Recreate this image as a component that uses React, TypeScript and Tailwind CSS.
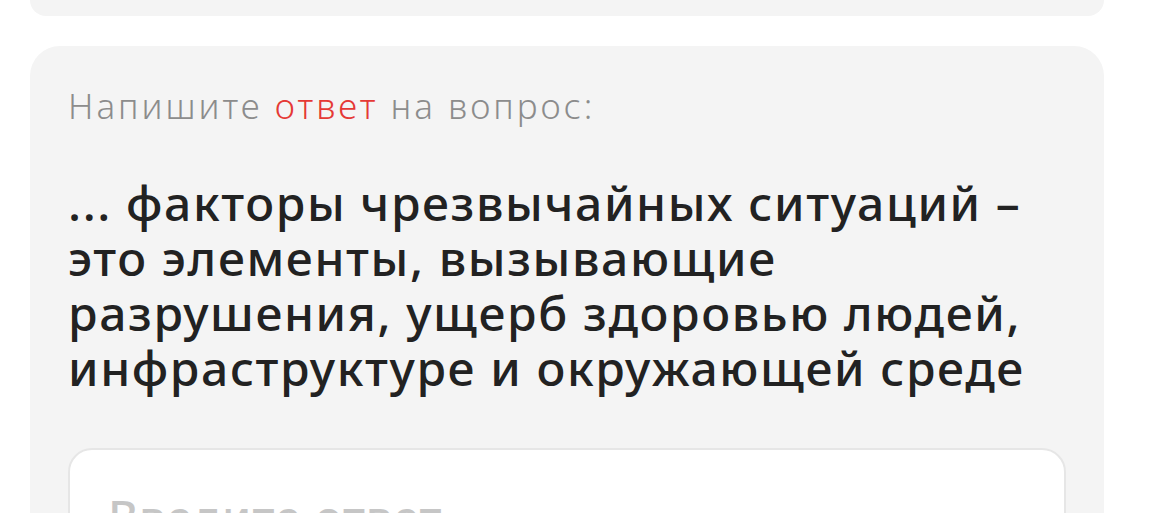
export default function App() {
  return (
    <main className="min-h-screen bg-white" style={{ fontFamily: '"Noto Sans", Roboto, sans-serif' }}>
      <div className="ml-[30px] mr-[47px] h-[16px] rounded-b-[30px] bg-[#f4f4f4]" />

      <section className="ml-[30px] mr-[47px] mt-[30px] rounded-[30px] bg-[#f4f4f4] px-[38px] pt-[40px] pb-10">
        <p className="text-[35px] font-light leading-[40px] tracking-[3px] text-[#8c8c8c]">
          Напишите <span className="text-[#e53935]">ответ</span> на вопрос:
        </p>

        <h2 className="mt-[49px] text-[48px] font-medium leading-[55px] tracking-[1.6px] text-[#222222]">
          ... факторы чрезвычайных ситуаций – это элементы, вызывающие разрушения, ущерб здоровью людей,
          инфраструктуре и окружающей среде
        </h2>

        <div className="mt-[53px] rounded-[24px] border-2 border-[#e6e6e6] bg-white px-[38px] pt-[32px] pb-8">
          <input
            placeholder="Введите ответ"
            className="w-full bg-transparent text-[46px] font-medium tracking-[1px] text-[#222222] outline-none placeholder:text-[#c6c6c6]"
          />
        </div>
      </section>
    </main>
  );
}
